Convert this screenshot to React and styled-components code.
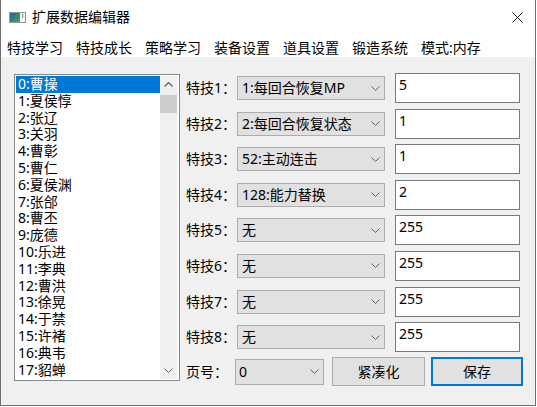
import React from 'react'
import styled, { createGlobalStyle } from 'styled-components'

const FONT = `"Noto Sans", "Noto Sans CJK SC", sans-serif`

const GlobalStyle = createGlobalStyle`
  html, body {
    margin: 0;
    padding: 0;
    background: #ffffff;
  }
  * {
    box-sizing: border-box;
  }
`

const Window = styled.div`
  width: 536px;
  height: 406px;
  display: flex;
  flex-direction: column;
  border: 1px solid #6f6f6f;
  border-top: none;
  font-family: ${FONT};
  font-size: 14px;
  color: #000;
  background: #ffffff;
`

const TitleBar = styled.div`
  height: 31px;
  padding-top: 3px;
  padding-left: 8px;
  display: flex;
  align-items: center;
  background: #ffffff;
`

const TitleText = styled.span`
  margin-left: 6px;
  font-size: 14px;
  line-height: 18px;
`

const CloseButton = styled.div`
  margin-left: auto;
  width: 36px;
  height: 28px;
  display: flex;
  align-items: center;
  justify-content: center;
`

const MenuBar = styled.div`
  height: 26px;
  padding: 8px 0 0 6px;
  display: flex;
  gap: 13px;
  background: #ffffff;
  line-height: 18px;
`

const MenuItem = styled.span`
  white-space: nowrap;
`

const Client = styled.div`
  flex: 1;
  display: flex;
  gap: 6px;
  padding: 16px 0 0 13px;
  background: #f0f0f0;
`

const ListBox = styled.div`
  margin-top: 1px;
  width: 166px;
  height: 307px;
  padding: 1px;
  display: flex;
  border: 1px solid #828790;
  background: #ffffff;
`

const Items = styled.div`
  flex: 1;
  overflow: hidden;
`

const Item = styled.div`
  height: 16.8px;
  line-height: 16.8px;
  padding-left: 2px;
  white-space: nowrap;
  background: ${p => (p.$selected ? '#0078d7' : 'transparent')};
  color: ${p => (p.$selected ? '#ffffff' : '#000000')};
`

const ScrollBar = styled.div`
  width: 17px;
  margin-right: 1px;
  display: flex;
  flex-direction: column;
  background: #f0f0f0;
`

const ScrollArrow = styled.div`
  height: 17px;
  display: flex;
  align-items: center;
  justify-content: center;
`

const ScrollThumb = styled.div`
  height: 18px;
  margin-top: 2px;
  background: #cdcdcd;
`

const Spacer = styled.div`
  flex: 1;
`

const Panel = styled.div`
  display: flex;
  flex-direction: column;
`

const SkillGrid = styled.div`
  display: grid;
  grid-template-columns: 51px 148px 135px;
  grid-auto-rows: 30px;
  row-gap: 5.6px;
  align-items: center;
`

const Label = styled.span`
  white-space: nowrap;
  line-height: 18px;
  width: ${p => p.$width || 'auto'};
`

const Combo = styled.div`
  height: ${p => p.$height || 24}px;
  width: ${p => (p.$width ? `${p.$width}px` : 'auto')};
  display: flex;
  align-items: center;
  padding: 0 4px 0 ${p => p.$pad ?? 4}px;
  border: 1px solid #adadad;
  background: #e1e1e1;
  line-height: 18px;
  white-space: nowrap;

  span {
    flex: 1;
  }
`

const TextBox = styled.div`
  height: 30px;
  margin-left: 10px;
  padding: 2px 3px;
  border: 1px solid #7a7a7a;
  background: #ffffff;
  line-height: 18px;
`

const BottomRow = styled.div`
  margin-top: 5px;
  height: 29px;
  display: flex;
  align-items: center;
`

const Button = styled.div`
  width: ${p => p.$width}px;
  height: 29px;
  margin-left: ${p => p.$gap}px;
  display: flex;
  align-items: center;
  justify-content: center;
  border: ${p => (p.$default ? '2px solid #0078d7' : '1px solid #adadad')};
  background: #e1e1e1;
  line-height: 18px;
`

const AppIcon = () => (
  <svg width="17" height="11" viewBox="0 0 17 11">
    <defs>
      <linearGradient id="icoFill" x1="0" y1="0" x2="1" y2="1">
        <stop offset="0" stopColor="#2a5f9a" />
        <stop offset="0.55" stopColor="#2f8a7a" />
        <stop offset="1" stopColor="#4aa85a" />
      </linearGradient>
    </defs>
    <rect x="0.5" y="0.5" width="16" height="10" fill="#f4f6f4" stroke="#8c9a92" />
    <rect x="1" y="1" width="10" height="9" fill="url(#icoFill)" />
    <rect x="13" y="2" width="1.2" height="4" fill="#7fae8a" />
  </svg>
)

const CloseIcon = () => (
  <svg width="11" height="11" viewBox="0 0 11 11">
    <path d="M0.5 0.5 L10.5 10.5 M10.5 0.5 L0.5 10.5" stroke="#1a1a1a" strokeWidth="1" />
  </svg>
)

const ChevronDown = ({ color = '#606060' }) => (
  <svg width="9" height="5" viewBox="0 0 9 5">
    <path d="M0.5 0.5 L4.5 4.5 L8.5 0.5" fill="none" stroke={color} strokeWidth="1" />
  </svg>
)

const ChevronUp = () => (
  <svg width="9" height="5" viewBox="0 0 9 5">
    <path d="M0.5 4.5 L4.5 0.5 L8.5 4.5" fill="none" stroke="#606060" strokeWidth="1.3" />
  </svg>
)

const menus = ['特技学习', '特技成长', '策略学习', '装备设置', '道具设置', '锻造系统', '模式:内存']

const generals = [
  '曹操', '夏侯惇', '张辽', '关羽', '曹彰', '曹仁', '夏侯渊', '张郃', '曹丕', '庞德',
  '乐进', '李典', '曹洪', '徐晃', '于禁', '许褚', '典韦', '貂蝉', '张郃',
]

const skills = [
  { name: '1:每回合恢复MP', value: '5' },
  { name: '2:每回合恢复状态', value: '1' },
  { name: '52:主动连击', value: '1' },
  { name: '128:能力替换', value: '2' },
  { name: '无', value: '255' },
  { name: '无', value: '255' },
  { name: '无', value: '255' },
  { name: '无', value: '255' },
]

export default function App() {
  return (
    <>
      <GlobalStyle />
      <Window>
        <TitleBar>
          <AppIcon />
          <TitleText>扩展数据编辑器</TitleText>
          <CloseButton>
            <CloseIcon />
          </CloseButton>
        </TitleBar>
        <MenuBar>
          {menus.map(m => (
            <MenuItem key={m}>{m}</MenuItem>
          ))}
        </MenuBar>
        <Client>
          <ListBox>
            <Items>
              {generals.map((g, i) => (
                <Item key={i} $selected={i === 0}>
                  {i}:{g}
                </Item>
              ))}
            </Items>
            <ScrollBar>
              <ScrollArrow>
                <ChevronUp />
              </ScrollArrow>
              <ScrollThumb />
              <Spacer />
              <ScrollArrow>
                <ChevronDown />
              </ScrollArrow>
            </ScrollBar>
          </ListBox>
          <Panel>
            <SkillGrid>
              {skills.map((s, i) => (
                <React.Fragment key={i}>
                  <Label>特技{i + 1}：</Label>
                  <Combo>
                    <span>{s.name}</span>
                    <ChevronDown />
                  </Combo>
                  <TextBox>{s.value}</TextBox>
                </React.Fragment>
              ))}
            </SkillGrid>
            <BottomRow>
              <Label $width="49px">页号：</Label>
              <Combo $width={89} $height={26} $pad={3}>
                <span>0</span>
                <ChevronDown />
              </Combo>
              <Button $width={93} $gap={8}>紧凑化</Button>
              <Button $width={92} $gap={6} $default>保存</Button>
            </BottomRow>
          </Panel>
        </Client>
      </Window>
    </>
  )
}
